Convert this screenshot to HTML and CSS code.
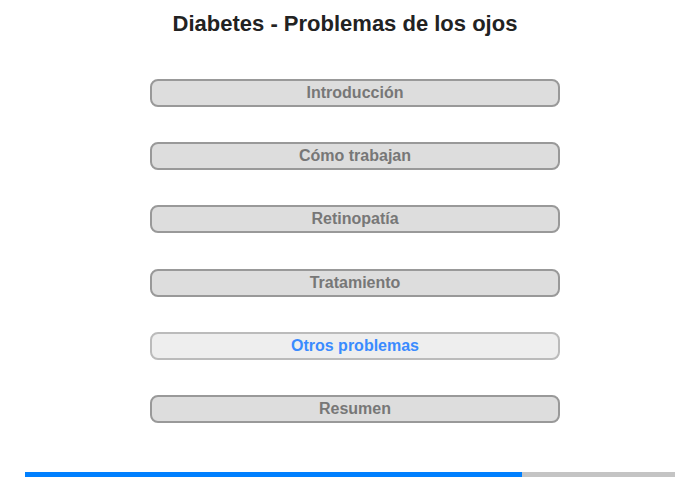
FILE: index.html
```html
<!DOCTYPE html>
<html lang="es">
<head>
<meta charset="utf-8">
<title>Diabetes - Problemas de los ojos</title>
<link rel="stylesheet" href="styles.css">
</head>
<body>
<div class="page">
  <h1 class="title">Diabetes - Problemas de los ojos</h1>
  <nav class="menu">
    <div class="item">Introducción</div>
    <div class="item">Cómo trabajan</div>
    <div class="item">Retinopatía</div>
    <div class="item">Tratamiento</div>
    <div class="item active">Otros problemas</div>
    <div class="item">Resumen</div>
  </nav>
  <div class="progress"><div class="progress-fill" style="width: 76.4%"></div></div>
</div>
</body>
</html>
```
FILE: styles.css
```css
html, body {
  margin: 0;
  padding: 0;
  background: #fff;
}
.page {
  width: 700px;
  height: 480px;
  font-family: "Liberation Sans", Arial, sans-serif;
  display: flex;
  flex-direction: column;
}
.title {
  margin: 11px 10px 0 0;
  font-family: "Liberation Sans", Arial, sans-serif;
  font-size: 22px;
  font-weight: bold;
  color: #222;
  text-align: center;
  line-height: 26px;
}
.menu {
  margin: 42px 0 0 150px;
  width: 410px;
  display: flex;
  flex-direction: column;
  gap: 35.2px;
}
.item {
  box-sizing: border-box;
  height: 28px;
  border: 2px solid #999;
  border-radius: 8px;
  background: #ddd;
  color: #777;
  font-weight: bold;
  font-size: 16px;
  line-height: 24px;
  text-align: center;
}
.item.active {
  background: #eee;
  border-color: #bbb;
  color: #3a8bff;
}
.progress {
  margin: 49px 0 0 25px;
  width: 650px;
  height: 5px;
  background: #c4c4c4;
}
.progress-fill {
  height: 100%;
  background: #0080ff;
}
```
